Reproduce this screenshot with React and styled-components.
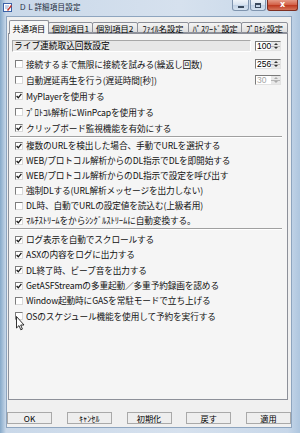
import React from 'react';
import styled, { createGlobalStyle } from 'styled-components';

const Global = createGlobalStyle`
  html, body { margin: 0; padding: 0; }
  body {
    width: 300px;
    height: 433px;
    overflow: hidden;
    font-family: "Noto Sans CJK JP", "Noto Sans", sans-serif;
    color: #000;
  }
`;

const Frame = styled.div`
  position: relative;
  width: 300px;
  height: 433px;
  display: flex;
  flex-direction: column;
  overflow: hidden;
  background: linear-gradient(90deg, #86a9c9 0px, #c9d8e9 6px, #d6e1ee 60%, #c7d7e9 96%, #aec6df 100%);
`;

const TitleBar = styled.div`
  height: 16px;
  display: flex;
  align-items: flex-start;
  flex: none;
`;

const AppIcon = styled.svg`
  margin: 3px 0 0 3px;
  flex: none;
`;

const Title = styled.div`
  flex: 1;
  margin: 2px 0 0 7px;
  font-size: 7.5px;
  line-height: 9px;
  letter-spacing: 0.2px;
  color: #1b2a3a;
  white-space: nowrap;
`;

const Caption = styled.div`
  flex: none;
  margin-right: 2px;
  height: 11px;
  display: flex;
  gap: 1px;
`;

const CapBtn = styled.div`
  width: ${p => p.$w}px;
  height: 11px;
  flex: none;
  box-sizing: border-box;
  display: flex;
  align-items: center;
  justify-content: center;
  border-left: 1px solid ${p => (p.$close ? '#7e2f22' : '#7f94ae')};
  border-right: 1px solid ${p => (p.$close ? '#7e2f22' : '#7f94ae')};
  border-bottom: 1px solid ${p => (p.$close ? '#7e2f22' : '#7f94ae')};
  border-radius: 0 0 3px 3px;
  background-color: ${p => (p.$close ? '#c94a32' : '#d3dfec')};
  background-image: ${p =>
    p.$close
      ? 'linear-gradient(180deg, #e49a86 0%, #d4644b 45%, #c03c22 55%, #d5745a 100%)'
      : 'linear-gradient(180deg, #eef3f9 0%, #d9e4f0 45%, #c3d3e6 55%, #d6e3f0 100%)'};
`;

const CloseGlyph = styled.span`
  color: #ffffff;
  font-family: "DejaVu Sans", sans-serif;
  font-weight: bold;
  font-size: 8px;
  line-height: 8px;
`;

const MinGlyph = styled.span`
  display: block;
  width: 6px;
  height: 2px;
  margin-top: 3px;
  background: #3a4a5e;
`;

const MaxGlyph = styled.span`
  display: block;
  width: 6px;
  height: 5px;
  box-sizing: border-box;
  border: 1px solid #3a4a5e;
  border-top-width: 2px;
`;

const Client = styled.div`
  flex: 1;
  margin: 0 8px 5px 6px;
  border: 1px solid #8ea5bf;
  background: #f0f0f0;
  display: flex;
  flex-direction: column;
  padding: 3px 3px 0 1px;
  min-height: 0;
`;

const TabStrip = styled.div`
  height: 13px;
  display: flex;
  align-items: flex-end;
  padding-left: 1px;
  flex: none;
`;

const Tab = styled.div`
  width: ${p => p.$w}px;
  height: ${p => (p.$active ? 14 : 11)}px;
  box-sizing: border-box;
  margin-bottom: ${p => (p.$active ? -1 : 0)}px;
  margin-left: ${p => (p.$active ? 0 : -1)}px;
  position: relative;
  z-index: ${p => (p.$active ? 2 : 1)};
  display: flex;
  align-items: center;
  justify-content: center;
  border: 1px solid #8d9099;
  border-bottom: ${p => (p.$active ? 'none' : '1px solid #8d9099')};
  border-radius: 2px 2px 0 0;
  background: ${p =>
    p.$active ? '#f7f7f7' : 'linear-gradient(180deg, #f4f4f4 0%, #e9e9e9 50%, #dedede 100%)'};
  font-size: 8.2px;
  line-height: 10px;
  white-space: nowrap;
  padding-top: ${p => (p.$active ? 0 : 1)}px;
`;

const Panel = styled.div`
  flex: 1;
  border: 1px solid #8d9099;
  background: #f5f5f5;
  padding: 6px 6px 0 3px;
  display: flex;
  flex-direction: column;
  min-height: 0;
`;

const HeaderRow = styled.div`
  height: 12px;
  display: flex;
  align-items: center;
  margin-bottom: 4px;
`;

const HeaderLabel = styled.div`
  flex: 1;
  height: 12px;
  box-sizing: border-box;
  border-top: 1px solid #a7a7a7;
  border-left: 1px solid #a7a7a7;
  border-bottom: 1px solid #ffffff;
  border-right: 1px solid #ffffff;
  background: #e7e7e7;
  font-size: 8.7px;
  line-height: 10px;
  padding-left: 1px;
  white-space: nowrap;
`;

const Group = styled.div`
  display: flex;
  flex-direction: column;
  margin-top: ${p => p.$top || 0}px;
`;

const Row = styled.div`
  height: ${p => p.$h}px;
  display: flex;
  align-items: center;
`;

const Box = styled.div`
  width: 8px;
  height: 8px;
  flex: none;
  box-sizing: border-box;
  margin-left: 3px;
  margin-right: 3px;
  border-top: 1px solid #7c7c7c;
  border-left: 1px solid #7c7c7c;
  border-bottom: 1px solid #d9d9d9;
  border-right: 1px solid #d9d9d9;
  background: #fff;
  display: flex;
  align-items: center;
  justify-content: center;
`;

const Label = styled.div`
  font-size: 8.7px;
  line-height: 11px;
  white-space: nowrap;
  letter-spacing: -0.15px;
  flex: 1;
  overflow: hidden;
  color: #111;
`;

const Spin = styled.div`
  width: 26px;
  height: 10px;
  flex: none;
  margin-left: 4px;
  box-sizing: border-box;
  display: flex;
  border-top: 1px solid #7a7a7a;
  border-left: 1px solid #7a7a7a;
  border-bottom: 1px solid #e2e2e2;
  border-right: 1px solid #e2e2e2;
  background: #fff;
`;

const SpinText = styled.div`
  flex: 1;
  font-family: "Liberation Sans", Arial, sans-serif;
  font-size: 8.5px;
  line-height: 8px;
  padding-left: 1px;
  color: ${p => (p.$disabled ? '#a3a3a3' : '#000')};
`;

const SpinArrows = styled.div`
  width: 9px;
  display: flex;
  flex-direction: column;
`;

const Arrow = styled.div`
  flex: 1;
  display: flex;
  align-items: center;
  justify-content: center;
  background: #e8e8e8;
  border-bottom: ${p => (p.$up ? '1px solid #b5b5b5' : 'none')};
  &::after {
    content: '';
    width: 0;
    height: 0;
    border-left: 2px solid transparent;
    border-right: 2px solid transparent;
    ${p => (p.$up ? 'border-bottom' : 'border-top')}: 2px solid ${p => (p.$disabled ? '#aaa' : '#333')};
  }
`;

const Separator = styled.div`
  height: 0;
  margin: 0 -1px 0 -2px;
  border-top: 1px solid #a0a0a0;
  border-bottom: 1px solid #ffffff;
`;

const Footer = styled.div`
  flex: none;
  height: 27px;
  box-sizing: border-box;
  padding: 12px 0 3px;
  margin-left: -1px;
  margin-right: -3px;
  display: flex;
  justify-content: space-between;
`;

const Button = styled.button`
  width: 45px;
  height: 12px;
  padding: 0;
  box-sizing: border-box;
  border-top: 1px solid #ffffff;
  border-left: 1px solid #ffffff;
  border-right: 1px solid #6b6b6b;
  border-bottom: 1px solid #6b6b6b;
  outline: 1px solid #a9a9a9;
  outline-offset: -1px;
  background: #eeeeee;
  font-family: "Noto Sans CJK JP", "Noto Sans", sans-serif;
  font-size: 8.2px;
  line-height: 10px;
  color: #000;
`;

const Cursor = styled.svg`
  position: absolute;
  left: 16px;
  top: 316px;
`;

function Check() {
  return (
    <svg width="6" height="6" viewBox="0 0 6 6">
      <path d="M0.6 3 L2.3 4.8 L5.4 0.8" fill="none" stroke="#1a1a1a" strokeWidth="1.3" />
    </svg>
  );
}

function SpinBox({ value, disabled }) {
  return (
    <Spin>
      <SpinText $disabled={disabled}>{value}</SpinText>
      <SpinArrows>
        <Arrow $up $disabled={disabled} />
        <Arrow $disabled={disabled} />
      </SpinArrows>
    </Spin>
  );
}

function Option({ label, checked, h, spin, disabled }) {
  return (
    <Row $h={h}>
      <Box>{checked && <Check />}</Box>
      <Label>{label}</Label>
      {spin && <SpinBox value={spin} disabled={disabled} />}
    </Row>
  );
}

const tabs = [
  { name: '共通項目', w: 40, active: true },
  { name: '個別項目1', w: 45 },
  { name: '個別項目2', w: 46 },
  { name: 'ﾌｧｲﾙ名設定', w: 53 },
  { name: 'ﾊﾟｽﾜｰﾄﾞ設定', w: 54 },
  { name: 'ﾌﾟﾛｷｼ設定', w: 47 },
];

const group1 = [
  { label: '接続するまで無限に接続を試みる(繰返し回数)', spin: '256' },
  { label: '自動遅延再生を行う(遅延時間[秒])', spin: '30', disabled: true },
  { label: 'MyPlayerを使用する', checked: true },
  { label: 'ﾌﾟﾛﾄｺﾙ解析にWinPcapを使用する' },
  { label: 'クリップボード監視機能を有効にする', checked: true },
];

const group2 = [
  { label: '複数のURLを検出した場合、手動でURLを選択する', checked: true },
  { label: 'WEB/プロトコル解析からのDL指示でDLを即開始する', checked: true },
  { label: 'WEB/プロトコル解析からのDL指示で設定を呼び出す', checked: true },
  { label: '強制DLする(URL解析メッセージを出力しない)' },
  { label: 'DL時、自動でURLの設定値を読込む(上級者用)' },
  { label: 'ﾏﾙﾁｽﾄﾘｰﾑをからｼﾝｸﾞﾙｽﾄﾘｰﾑに自動変換する。', checked: true },
];

const group3 = [
  { label: 'ログ表示を自動でスクロールする', checked: true },
  { label: 'ASXの内容をログに出力する', checked: true },
  { label: 'DL終了時、ビープ音を出力する', checked: true },
  { label: 'GetASFStreamの多重起動／多重予約録画を認める', checked: true },
  { label: 'Window起動時にGASを常駐モードで立ち上げる' },
  { label: 'OSのスケジュール機能を使用して予約を実行する' },
];

export default function App() {
  return (
    <>
      <Global />
      <Frame>
        <TitleBar>
          <AppIcon width="9" height="9" viewBox="0 0 9 9">
            <rect x="0.5" y="0.5" width="8" height="8" fill="#ffffff" stroke="#3c63a8" />
            <path d="M2 3 H6 M2 5 H5" stroke="#6d8cc4" strokeWidth="0.8" />
            <path d="M4.5 7.5 L8.5 2.5" stroke="#c0322a" strokeWidth="1.4" />
          </AppIcon>
          <Title>ＤＬ詳細項目設定</Title>
          <Caption>
            <CapBtn $w={17}><MinGlyph /></CapBtn>
            <CapBtn $w={16}><MaxGlyph /></CapBtn>
            <CapBtn $w={31} $close><CloseGlyph>x</CloseGlyph></CapBtn>
          </Caption>
        </TitleBar>
        <Client>
          <TabStrip>
            {tabs.map(t => (
              <Tab key={t.name} $w={t.w} $active={t.active}>{t.name}</Tab>
            ))}
          </TabStrip>
          <Panel>
            <HeaderRow>
              <HeaderLabel>ライブ連続取込回数設定</HeaderLabel>
              <SpinBox value="100" />
            </HeaderRow>
            <Group>
              {group1.map(o => <Option key={o.label} h={16} {...o} />)}
            </Group>
            <Separator />
            <Group>
              {group2.map(o => <Option key={o.label} h={15} {...o} />)}
            </Group>
            <Separator />
            <Group $top={2}>
              {group3.map(o => <Option key={o.label} h={15.3} {...o} />)}
            </Group>
          </Panel>
          <Footer>
            <Button>OK</Button>
            <Button>ｷｬﾝｾﾙ</Button>
            <Button>初期化</Button>
            <Button>戻す</Button>
            <Button>適用</Button>
          </Footer>
        </Client>
        <Cursor width="9" height="15" viewBox="0 0 9 15">
          <path d="M0.5 0.5 L0.5 12 L3 9.6 L4.8 13.8 L6.4 13.1 L4.7 9 L8 9 Z" fill="#ffffff" stroke="#000" strokeWidth="0.8" strokeLinejoin="round" />
        </Cursor>
      </Frame>
    </>
  );
}
